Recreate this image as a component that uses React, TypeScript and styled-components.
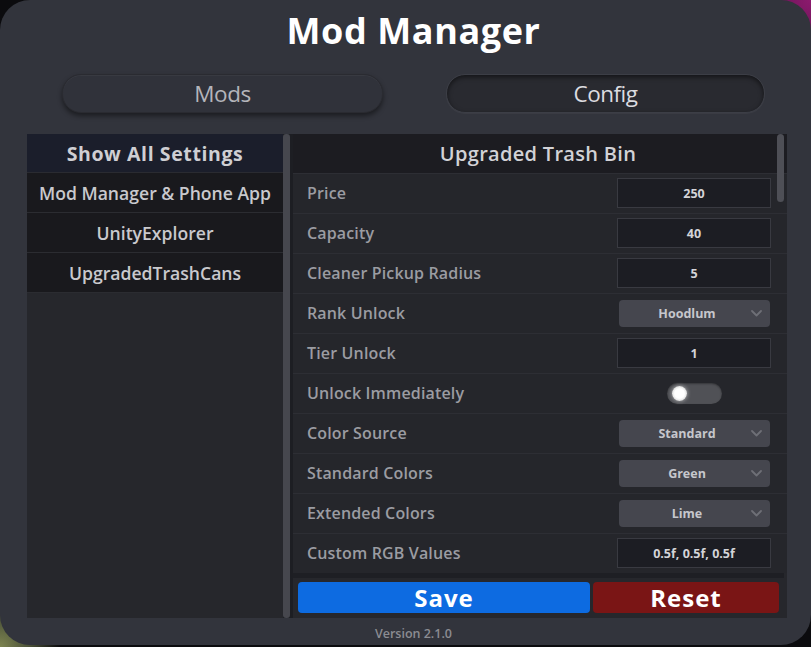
import React from "react";
import styled, { createGlobalStyle } from "styled-components";

const Global = createGlobalStyle`
  html, body { margin: 0; padding: 0; }
  body {
    width: 811px;
    height: 647px;
    overflow: hidden;
    background:
      radial-gradient(circle at 100% 0%, #8c1a6e 0, #6a1455 40px, transparent 70px),
      radial-gradient(circle at 0% 100%, #7d8450 0, #4a5038 30px, transparent 60px),
      #0b0b0e;
    font-family: "Open Sans", "Noto Sans", sans-serif;
  }
`;

const Panel = styled.div`
  width: 811px;
  height: 645px;
  box-sizing: border-box;
  border-radius: 30px;
  background: #32343c;
  display: flex;
  flex-direction: column;
`;

const Title = styled.h1`
  margin: 0;
  height: 62px;
  line-height: 62px;
  text-align: center;
  padding-left: 16px;
  font-size: 36px;
  font-weight: 700;
  color: #ffffff;
  letter-spacing: 0.6px;
`;

const TabRow = styled.div`
  margin-top: 12px;
  display: grid;
  grid-template-columns: 321px 319px;
  column-gap: 63px;
  padding-left: 62px;
  height: 39px;
`;

const Tab = styled.div<{ $active?: boolean }>`
  box-sizing: border-box;
  border-radius: 19px;
  display: flex;
  align-items: center;
  justify-content: center;
  font-size: 22.5px;
  font-weight: 400;
  letter-spacing: -0.5px;
  color: ${(p) => (p.$active ? "#dcdce0" : "#b4b5bb")};
  background: ${(p) => (p.$active ? "#292a30" : "#30323a")};
  border: 1px solid ${(p) => (p.$active ? "#3c3e46" : "#2a2b31")};
  box-shadow: ${(p) =>
    p.$active
      ? "inset 0 2px 5px rgba(0,0,0,0.55), 0 1px 0 rgba(255,255,255,0.04)"
      : "0 3px 5px rgba(0,0,0,0.45), inset 0 1px 0 rgba(255,255,255,0.04)"};
`;

const Main = styled.div`
  margin: 21px 24px 0 27px;
  height: 484px;
  display: flex;
  background: #1d1e23;
`;

const LeftCol = styled.div`
  width: 256px;
  background: #26272c;
  display: flex;
  flex-direction: column;
`;

const LeftHeader = styled.div`
  height: 38px;
  background: #1b1e2b;
  display: flex;
  align-items: center;
  justify-content: center;
  font-size: 19.5px;
  font-weight: 700;
  color: #cfcfd3;
  letter-spacing: 0.6px;
  border-bottom: 1px solid #2a2b31;
`;

const ModItem = styled.div`
  height: 39px;
  background: #19191d;
  display: flex;
  align-items: center;
  justify-content: center;
  font-size: 17.6px;
  font-weight: 600;
  color: #c9c9cd;
  border-bottom: 1px solid #2b2c31;
`;

const VScroll = styled.div`
  width: 7px;
  margin-right: 3px;
  border-radius: 3px;
  background: #46474e;
`;

const RightCol = styled.div`
  position: relative;
  flex: 1;
  display: flex;
  flex-direction: column;
  background: #26272c;
`;

const RightHeader = styled.div`
  height: 39px;
  background: #1c1c21;
  display: flex;
  align-items: center;
  justify-content: center;
  font-size: 20px;
  font-weight: 600;
  color: #d2d2d6;
  letter-spacing: 0.3px;
  padding-right: 4px;
`;

const SettingRow = styled.div`
  height: 40px;
  box-sizing: border-box;
  display: flex;
  align-items: center;
  padding: 0 16px 1px 14px;
  border-top: 1px solid #2d2e34;
  background: #25262b;
`;

const Label = styled.div`
  flex: 1;
  font-size: 16px;
  font-weight: 600;
  color: #9b9ca2;
  letter-spacing: 0.15px;
`;

const Control = styled.div`
  width: 154px;
  display: flex;
  justify-content: center;
`;

const TextField = styled.div`
  box-sizing: border-box;
  width: 154px;
  height: 30px;
  background: #1c1d23;
  border: 1px solid #393a41;
  display: flex;
  align-items: center;
  justify-content: center;
  font-size: 12.5px;
  font-weight: 700;
  color: #d4d4d8;
`;

const Dropdown = styled.div`
  box-sizing: border-box;
  position: relative;
  width: 151px;
  height: 27px;
  border-radius: 4px;
  background: #45464e;
  display: flex;
  align-items: center;
  justify-content: center;
  padding-right: 14px;
  font-size: 12.5px;
  font-weight: 700;
  color: #c6c7cc;
`;

const Chevron = styled.svg`
  position: absolute;
  right: 8px;
  top: 10px;
`;

const Toggle = styled.div`
  position: relative;
  width: 55px;
  height: 21px;
  border-radius: 11px;
  background: #505156;
  box-shadow: inset 0 1px 2px rgba(0,0,0,0.35);
`;

const Knob = styled.div`
  position: absolute;
  left: 5px;
  top: 3px;
  width: 15px;
  height: 15px;
  border-radius: 50%;
  background: radial-gradient(circle, #ffffff 0 45%, #e6e6e6 65%, rgba(255,255,255,0.4) 100%);
  box-shadow: 0 0 4px rgba(255,255,255,0.6);
`;

const Strip = styled.div`
  height: 5px;
  background: #1e1f24;
  margin-right: 3px;
`;

const ButtonRow = styled.div`
  flex: 1;
  display: flex;
  gap: 3px;
  padding: 4px 8px 5px 5px;
  background: #26272c;
`;

const ActionButton = styled.button<{ $kind: "save" | "reset" }>`
  box-sizing: border-box;
  height: 31px;
  width: ${(p) => (p.$kind === "save" ? "292px" : "186px")};
  border: none;
  border-radius: 4px;
  background: ${(p) => (p.$kind === "save" ? "#0d6be1" : "#7a1515")};
  color: #ffffff;
  font-family: "Open Sans", "Noto Sans", sans-serif;
  font-size: 24px;
  font-weight: 700;
  letter-spacing: 1px;
  padding: 0;
  line-height: 31px;
`;

const RightScroll = styled.div`
  position: absolute;
  right: 3px;
  top: 0;
  width: 7px;
  height: 68px;
  border-radius: 4px;
  background: #4e4f56;
`;

const Version = styled.div`
  flex: 1;
  display: flex;
  align-items: center;
  justify-content: center;
  font-size: 12.5px;
  font-weight: 600;
  color: #8b8c92;
  padding: 3px 0 0 16px;
`;

type Setting =
  | { label: string; kind: "text"; value: string }
  | { label: string; kind: "select"; value: string }
  | { label: string; kind: "toggle" };

const settings: Setting[] = [
  { label: "Price", kind: "text", value: "250" },
  { label: "Capacity", kind: "text", value: "40" },
  { label: "Cleaner Pickup Radius", kind: "text", value: "5" },
  { label: "Rank Unlock", kind: "select", value: "Hoodlum" },
  { label: "Tier Unlock", kind: "text", value: "1" },
  { label: "Unlock Immediately", kind: "toggle" },
  { label: "Color Source", kind: "select", value: "Standard" },
  { label: "Standard Colors", kind: "select", value: "Green" },
  { label: "Extended Colors", kind: "select", value: "Lime" },
  { label: "Custom RGB Values", kind: "text", value: "0.5f, 0.5f, 0.5f" },
];

const mods = ["Mod Manager & Phone App", "UnityExplorer", "UpgradedTrashCans"];

function renderControl(s: Setting) {
  if (s.kind === "text") return <TextField>{s.value}</TextField>;
  if (s.kind === "select")
    return (
      <Dropdown>
        {s.value}
        <Chevron width="11" height="7" viewBox="0 0 11 7">
          <path d="M1 1 L5.5 5.5 L10 1" fill="none" stroke="#6e6f76" strokeWidth="1.8" strokeLinecap="round" strokeLinejoin="round" />
        </Chevron>
      </Dropdown>
    );
  return (
    <Toggle>
      <Knob />
    </Toggle>
  );
}

export default function App() {
  return (
    <>
      <Global />
      <Panel>
        <Title>Mod Manager</Title>
        <TabRow>
          <Tab>Mods</Tab>
          <Tab $active>Config</Tab>
        </TabRow>
        <Main>
          <LeftCol>
            <LeftHeader>Show All Settings</LeftHeader>
            {mods.map((m) => (
              <ModItem key={m}>{m}</ModItem>
            ))}
          </LeftCol>
          <VScroll />
          <RightCol>
            <RightHeader>Upgraded Trash Bin</RightHeader>
            {settings.map((s) => (
              <SettingRow key={s.label}>
                <Label>{s.label}</Label>
                <Control>{renderControl(s)}</Control>
              </SettingRow>
            ))}
            <Strip />
            <ButtonRow>
              <ActionButton $kind="save">Save</ActionButton>
              <ActionButton $kind="reset">Reset</ActionButton>
            </ButtonRow>
            <RightScroll />
          </RightCol>
        </Main>
        <Version>Version 2.1.0</Version>
      </Panel>
    </>
  );
}
